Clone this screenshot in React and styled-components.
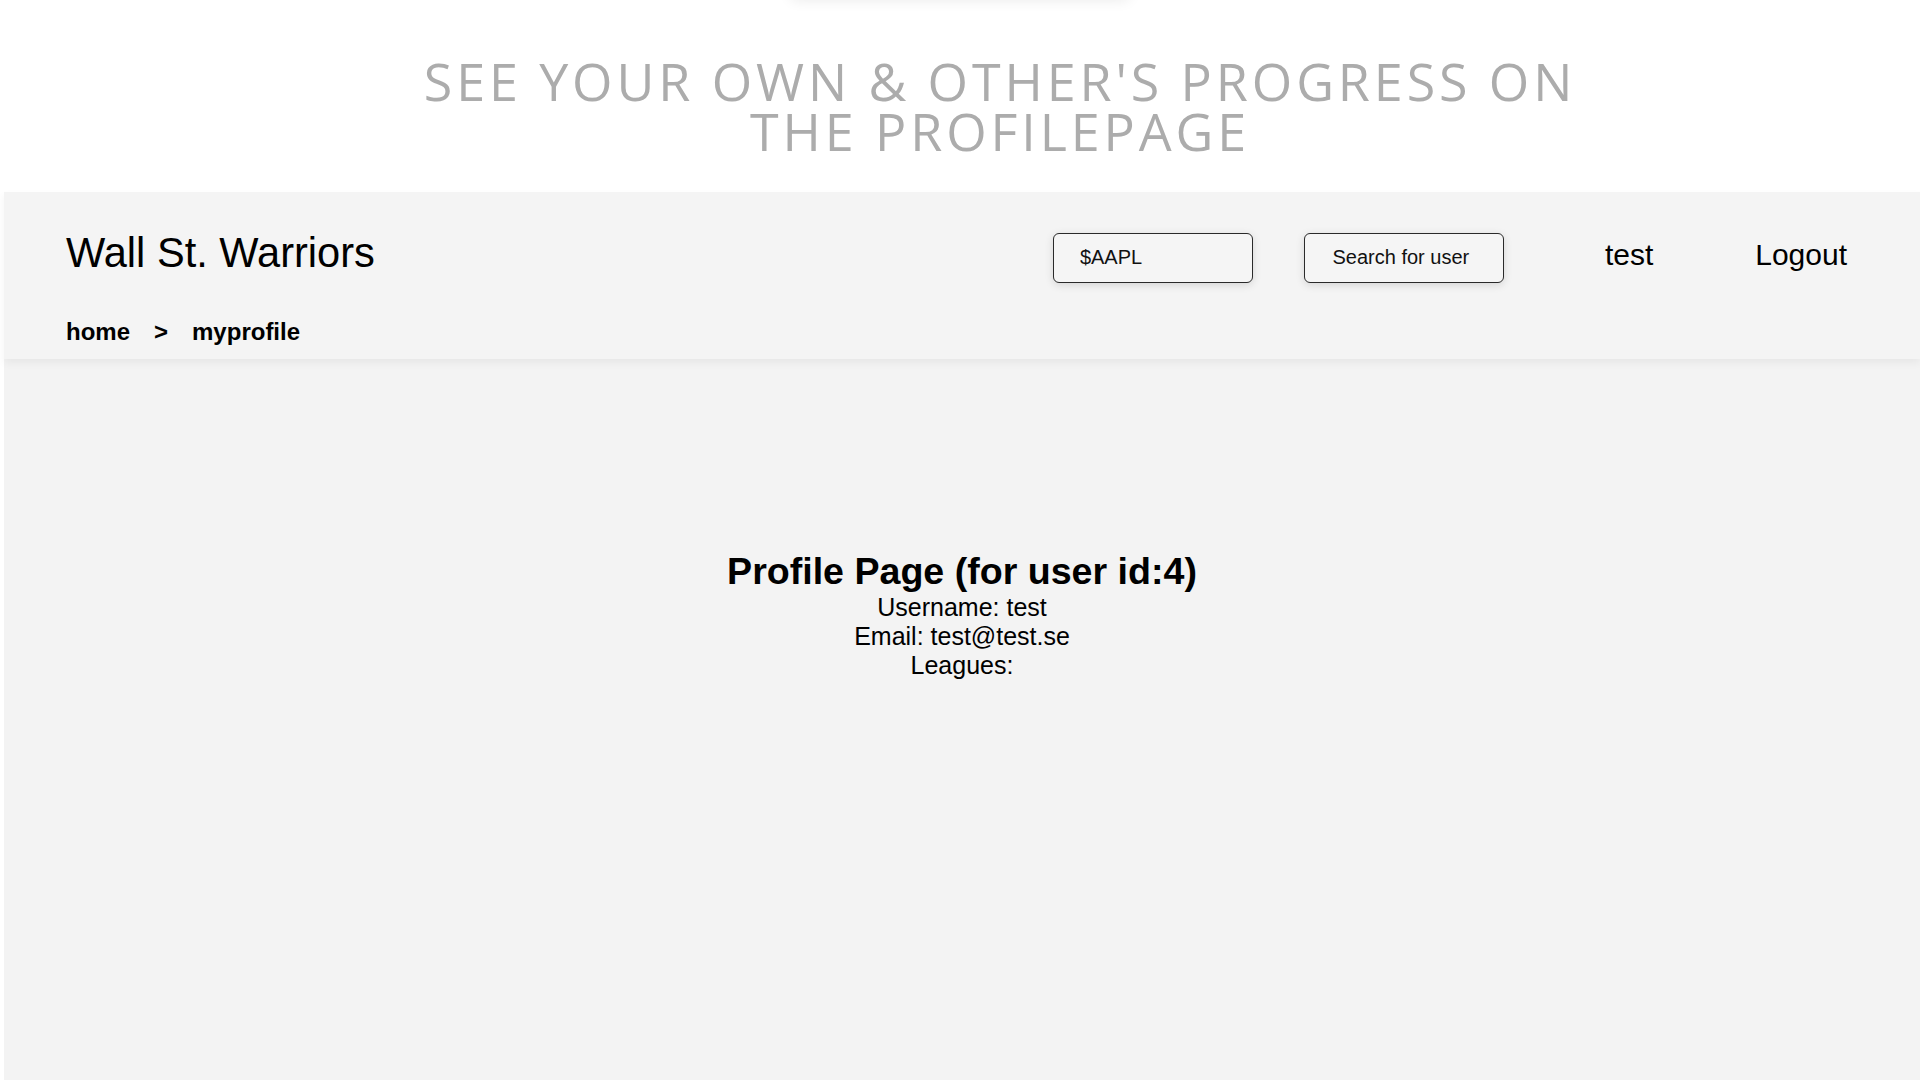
import React from 'react';
import styled, { createGlobalStyle } from 'styled-components';

const GlobalStyle = createGlobalStyle`
  html, body { margin: 0; padding: 0; background: #fff; }
  body { font-family: 'Liberation Sans', Arial, sans-serif; color: #000; }
  h1, h2, p { margin: 0; padding: 0; }
`;

const Page = styled.div`
  width: 1920px;
  overflow: hidden;
`;

// shadow of the previous slide peeking in from above
const PrevSlide = styled.div`
  width: 340px;
  height: 12px;
  margin: -12px auto 0;
  background: #fff;
  border-radius: 6px;
  box-shadow: 0 0 14px rgba(0, 0, 0, 0.09);
`;

const Tagline = styled.h2`
  padding: 56px 0 0 80px;
  text-align: center;
  font-family: 'Open Sans', 'Liberation Sans', sans-serif;
  font-weight: 400;
  font-size: 52px;
  line-height: 50px;
  letter-spacing: 3.9px;
  color: #acacac;
  text-transform: uppercase;
`;

const Shot = styled.div`
  margin: 36px 0 0 4px;
  background: #f3f3f3;
  min-height: 900px;
`;

const Header = styled.header`
  background: #f4f4f4;
  padding: 37px 73px 13px 62px;
  box-shadow: 0 4px 8px rgba(0, 0, 0, 0.05);
  position: relative;
`;

const TopRow = styled.div`
  display: flex;
  align-items: baseline;
`;

const Brand = styled.h1`
  font-size: 41.6px;
  font-weight: 400;
  line-height: 47px;
  flex: 1;
`;

const Field = styled.input`
  box-sizing: border-box;
  width: 200px;
  height: 50px;
  padding: 0 0 0 26px;
  border: 1px solid #2a2a2a;
  border-radius: 6px;
  background: #f5f5f5;
  box-shadow: 0 2px 9px rgba(0, 0, 0, 0.13);
  font-family: 'Liberation Sans', Arial, sans-serif;
  font-size: 20px;
  color: #111;
  outline: none;
  position: relative;
  top: -3px;
`;

const Button = styled.button`
  box-sizing: border-box;
  width: 200px;
  height: 50px;
  margin-left: 51px;
  border: 1px solid #2a2a2a;
  border-radius: 6px;
  background: #f5f5f5;
  box-shadow: 0 2px 9px rgba(0, 0, 0, 0.13);
  font-family: 'Liberation Sans', Arial, sans-serif;
  font-size: 20px;
  color: #111;
  padding: 0 6px 0 0;
  position: relative;
  top: -3px;
`;

const NavLink = styled.a`
  margin-left: ${p => p.gap}px;
  font-size: 30px;
  color: #000;
  text-decoration: none;
  position: relative;
  top: -2px;
`;

const Crumbs = styled.nav`
  display: flex;
  gap: 24px;
  margin-top: 32px;
  font-size: 24px;
  font-weight: 700;
  line-height: 28px;
`;

const Body = styled.main`
  padding: 191px 0 0 0;
  text-align: center;
`;

const Title = styled.h1`
  font-size: 37.6px;
  font-weight: 700;
  line-height: 43px;
`;

const Info = styled.p`
  font-size: 25px;
  line-height: 29.4px;
`;

export default function App() {
  return (
    <Page>
      <GlobalStyle />
      <PrevSlide />
      <Tagline>
        See your own &amp; other's progress on<br />the profilepage
      </Tagline>
      <Shot>
        <Header>
          <TopRow>
            <Brand>Wall St. Warriors</Brand>
            <Field defaultValue="$AAPL" />
            <Button>Search for user</Button>
            <NavLink gap={101}>test</NavLink>
            <NavLink gap={102}>Logout</NavLink>
          </TopRow>
          <Crumbs>
            <span>home</span>
            <span>&gt;</span>
            <span>myprofile</span>
          </Crumbs>
        </Header>
        <Body>
          <Title>Profile Page (for user id:4)</Title>
          <Info>Username: test</Info>
          <Info>Email: test@test.se</Info>
          <Info>Leagues:</Info>
        </Body>
      </Shot>
    </Page>
  );
}
